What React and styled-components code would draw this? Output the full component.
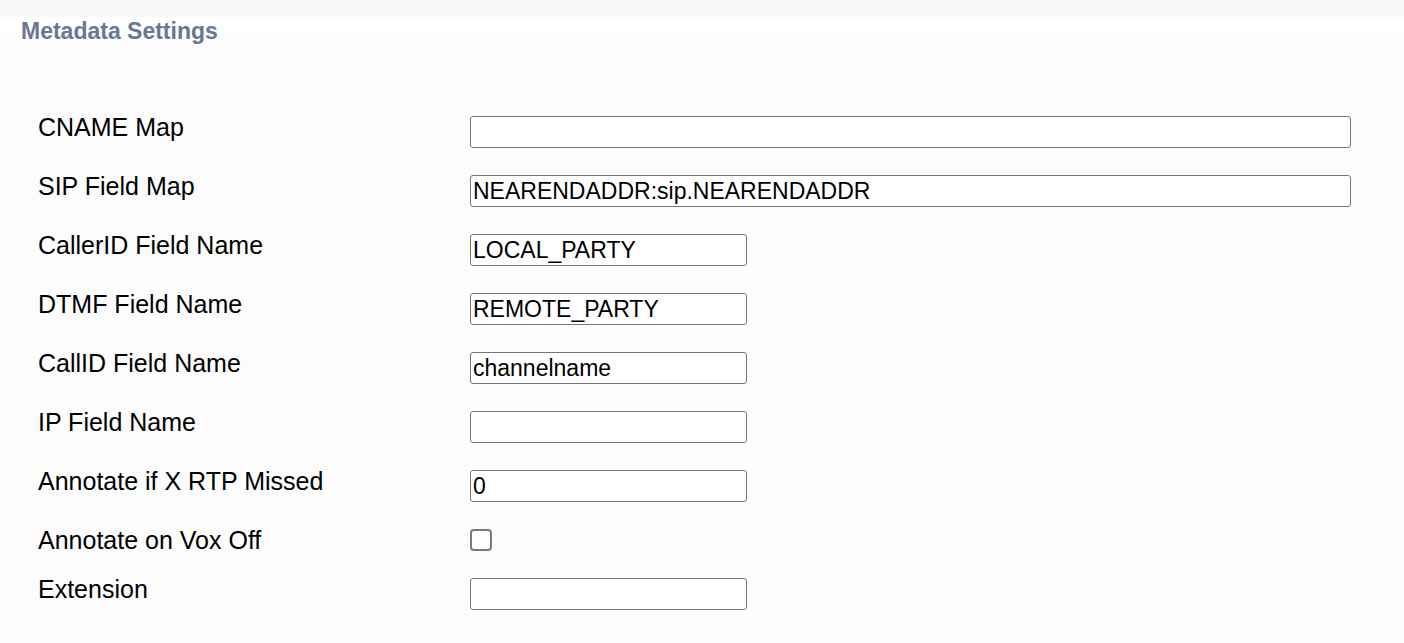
import React from 'react';
import styled, { createGlobalStyle } from 'styled-components';

const GlobalStyle = createGlobalStyle`
  html, body {
    margin: 0;
    padding: 0;
    background: #fcfcfc;
    font-family: "Liberation Sans", Arial, sans-serif;
  }
`;

const Page = styled.div`
  width: 1404px;
  min-height: 643px;
  background: #fcfcfc;
`;

const Header = styled.div`
  height: 43px;
  padding: 20px 0 0 21px;
  box-sizing: border-box;
  background: linear-gradient(#f9f9f9 0 17px, #ffffff 17px 32px, #fcfcfc 32px);
`;

const Title = styled.h2`
  margin: 0;
  font-size: 23px;
  line-height: 23px;
  font-weight: bold;
  color: #687795;
`;

const Form = styled.div`
  display: grid;
  grid-template-columns: 432px 1fr;
  row-gap: 27px;
  align-items: start;
  padding: 73px 0 32px 38px;
`;

const Label = styled.label`
  font-size: 25px;
  line-height: 20px;
  padding-top: 1px;
  color: #000;
`;

const Input = styled.input`
  box-sizing: border-box;
  width: ${p => (p.$wide ? '881px' : '277px')};
  height: 32px;
  margin: 0;
  padding: 1px 2px;
  border: 1px solid #767676;
  border-radius: 3px;
  background: #fff;
  font-family: "Liberation Sans", Arial, sans-serif;
  font-size: 23px;
  color: #000;
  outline: none;
`;

const Check = styled.input`
  box-sizing: border-box;
  appearance: none;
  width: 22px;
  height: 22px;
  margin: 0;
  border: 2px solid #7a7a7a;
  border-radius: 4px;
  background: #fff;
`;

const fields = [
  { label: 'CNAME Map', value: '', wide: true },
  { label: 'SIP Field Map', value: 'NEARENDADDR:sip.NEARENDADDR', wide: true },
  { label: 'CallerID Field Name', value: 'LOCAL_PARTY' },
  { label: 'DTMF Field Name', value: 'REMOTE_PARTY' },
  { label: 'CallID Field Name', value: 'channelname' },
  { label: 'IP Field Name', value: '' },
  { label: 'Annotate if X RTP Missed', value: '0' },
  { label: 'Annotate on Vox Off', check: true },
  { label: 'Extension', value: '' },
];

export default function App() {
  return (
    <Page>
      <GlobalStyle />
      <Header>
        <Title>Metadata Settings</Title>
      </Header>
      <Form>
        {fields.map(f => (
          <React.Fragment key={f.label}>
            <Label>{f.label}</Label>
            {f.check ? (
              <Check type="checkbox" />
            ) : (
              <Input $wide={f.wide} defaultValue={f.value} />
            )}
          </React.Fragment>
        ))}
      </Form>
    </Page>
  );
}
